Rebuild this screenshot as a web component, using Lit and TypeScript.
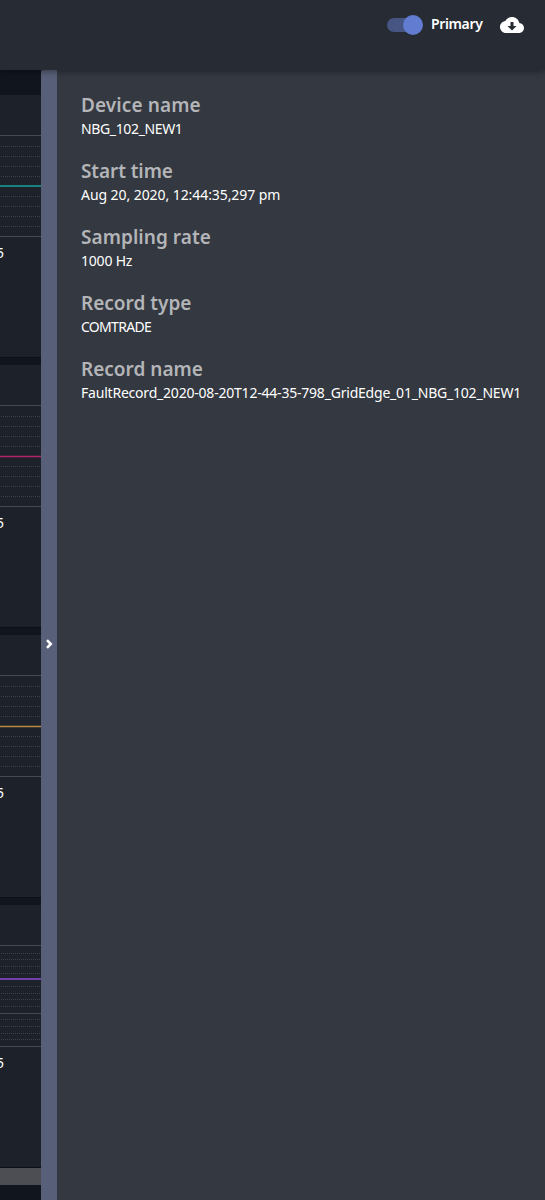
import { LitElement, html, css, svg } from "lit";
import { customElement, property } from "lit/decorators.js";
import { styleMap } from "lit/directives/style-map.js";

interface Chart { color: string; level: number; solid: number[]; dotted: number[] }

const EVEN = { solid: [40.5, 141.5], dotted: [51.5, 61.5, 71.5, 81.5, 101.5, 111.5, 121.5, 131.5] };
const CHARTS: Chart[] = [
  { color: "#197f7f", level: 91, ...EVEN },
  { color: "#b3246c", level: 91.5, ...EVEN },
  { color: "#b58a42", level: 91.5, ...EVEN },
  { color: "#7040a8", level: 74, solid: [40.5, 108.5, 141.5],
    dotted: [48.5, 54.5, 61.5, 68.5, 81.5, 88.5, 94.5, 101.5, 114.5, 121.5, 128.5, 134.5] },
];

const DETAILS = [
  { label: "Device name", value: "NBG_102_NEW1", ls: 0.11, vs: -0.36 },
  { label: "Start time", value: "Aug 20, 2020, 12:44:35,297 pm", ls: -0.08, vs: -0.07 },
  { label: "Sampling rate", value: "1000 Hz", ls: 0.05, vs: -0.2 },
  { label: "Record type", value: "COMTRADE", ls: 0, vs: -0.7 },
  { label: "Record name", value: "FaultRecord_2020-08-20T12-44-35-798_GridEdge_01_NBG_102_NEW1", ls: 0, vs: -0.21 },
];

@customElement("signal-chart")
export class SignalChart extends LitElement {
  @property({ attribute: false }) chart!: Chart;
  static styles = css`
    :host { display: block; flex: none; height: 262px; background: #1d2129; border-bottom: 1px solid #0c0f15; margin-bottom: 7px; overflow: hidden; }
    .plot { display: block; }
    .tick { display: block; width: 8px; margin-left: -4px; margin-top: 5px; font: 14px/20px "Noto Sans", sans-serif; color: #fff; }
  `;
  render() {
    const c = this.chart;
    return html`
      <svg class="plot" width="41" height="143">
        ${c.dotted.map((y) => svg`<path d="M1 ${y}H41" stroke="#3d414a" stroke-dasharray="1 1"/>`)}
        ${c.solid.map((y) => svg`<path d="M0 ${y}H41" stroke="#444955"/>`)}
        <path d="M0 ${c.level}H41" stroke=${c.color} stroke-width=${c.level % 1 ? 1.5 : 2} />
      </svg>
      <span class="tick">5</span>`;
  }
}

@customElement("app-root")
export class AppRoot extends LitElement {
  static styles = css`
    :host { display: flex; flex-direction: column; height: 1200px; overflow: hidden; background: #343840; color: #fff; font-family: "Noto Sans", sans-serif; }
    .header { position: relative; z-index: 1; flex: none; height: 70px; box-sizing: border-box; padding: 13px 21px 0 0; display: flex; justify-content: flex-end; align-items: flex-start; background: #272b33; box-shadow: 0 2px 6px rgba(0,0,0,.35); }
    .switch { display: block; margin: 2px 8px 0 0; }
    .primary { font-size: 14px; font-weight: 600; letter-spacing: -0.37px; line-height: 22px; width: 69px; white-space: nowrap; }
    .main { flex: 1; min-height: 0; display: flex; }
    .charts { width: 41px; flex: none; background: #11151d; padding-top: 25px; box-sizing: border-box; display: flex; flex-direction: column; }
    .scroll { height: 17px; flex: none; margin-top: -7px; background: #4c4e54; }
    .divider { width: 16px; flex: none; background: #585f78; border-top-left-radius: 3px; display: flex; justify-content: center; padding-top: 569px; box-sizing: border-box; }
    .details { flex: 1; min-width: 0; margin: 0; padding: 23px 0 0 24px; }
    .item { height: 66px; white-space: nowrap; }
    .label { font-size: 19px; line-height: 25px; font-weight: 600; color: #b3b5b8; }
    .value { margin: 0; font-size: 14px; line-height: 22px; }
  `;
  render() {
    return html`
      <header class="header">
        <svg class="switch" width="36" height="20" aria-label="Primary values" role="img">
          <rect y="3" width="34" height="14" rx="7" fill="#465582"/><circle cx="26" cy="10" r="10" fill="#617cd0"/>
        </svg>
        <span class="primary">Primary</span>
        <svg width="24" height="24" viewBox="0 0 24 24" fill="#fff">
          <path fill-rule="evenodd" d="M19.35 10.04C18.67 6.59 15.64 4 12 4 9.11 4 6.6 5.64 5.35 8.04 2.34 8.36 0 10.91 0 14c0 3.31 2.69 6 6 6h13c2.76 0 5-2.24 5-5 0-2.64-2.05-4.78-4.65-4.96zM10.5 9h3v4h3L12 17.5 7.5 13h3z"/>
        </svg>
      </header>
      <main class="main">
        <section class="charts">
          ${CHARTS.map((c) => html`<signal-chart .chart=${c}></signal-chart>`)}
          <div class="scroll"></div>
        </section>
        <div class="divider">
          <svg width="8" height="10" fill="none" stroke="#fff" stroke-width="2.5"><path d="M2 1.2L5.8 5 2 8.8"/></svg>
        </div>
        <dl class="details">
          ${DETAILS.map((d) => html`<div class="item">
            <dt class="label"><span style=${styleMap({ letterSpacing: `${d.ls}px` })}>${d.label}</span></dt>
            <dd class="value"><span style=${styleMap({ letterSpacing: `${d.vs}px` })}>${d.value}</span></dd>
          </div>`)}
        </dl>
      </main>`;
  }
}
